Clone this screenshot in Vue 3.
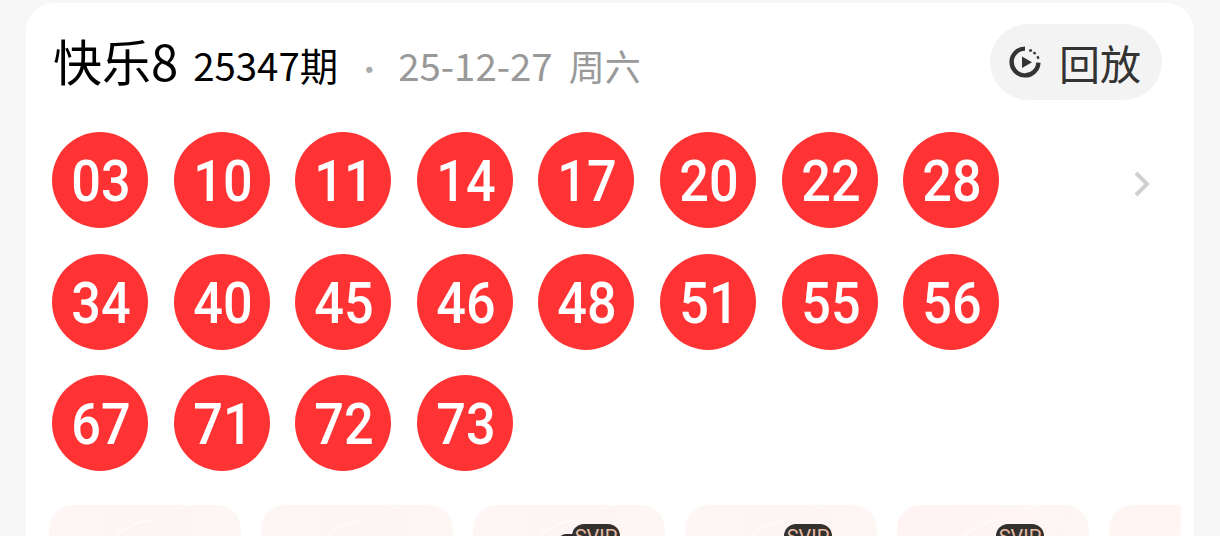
<template>
  <div class="page">
    <div class="card">
      <div class="head">
        <div class="title">
          <span class="name">快乐8</span>
          <span class="issue">25347期</span>
          <span class="dot">·</span>
          <span class="date">25-12-27</span>
          <span class="week">周六</span>
        </div>
        <div class="replay">
          <svg class="replay-icon" viewBox="0 0 32 32" width="32" height="32">
            <path d="M16 2.6A13.4 13.4 0 1 0 29.4 16.6" fill="none" stroke="#333" stroke-width="4.4" />
            <path d="M21.2 3.4l.7 2.2M26.2 6.2l-1.3 1.8M30 11l-2 1" fill="none" stroke="#333" stroke-width="2.8" />
            <path d="M13 10.5l10 5.7-10 5.8z" fill="#333" />
          </svg>
          <span>回放</span>
        </div>
      </div>
      <div class="draw">
        <div class="balls">
          <div class="ball" v-for="n in numbers" :key="n"><span>{{ n }}</span></div>
        </div>
        <svg class="arrow" viewBox="0 0 18 28" width="18" height="28">
          <path d="M3 3l11 11L3 25" fill="none" stroke="#d0d0d0" stroke-width="4" />
        </svg>
      </div>
      <div class="tiles">
        <div class="tile" :class="t.kind" v-for="t in tiles" :key="t.id">
          <svg class="swirl" viewBox="0 0 192 40" width="192" height="40">
            <path d="M60 40C70 24 84 17 102 15M128 5l14-6" fill="none" stroke="#fff" stroke-width="1.5" />
          </svg>
          <span class="shadow" v-if="t.id === 3"></span>
          <span class="svip" v-if="t.svip">SVIP</span>
        </div>
      </div>
    </div>
  </div>
</template>

<script setup>
const numbers = [
  "03", "10", "11", "14", "17", "20", "22", "28",
  "34", "40", "45", "46", "48", "51", "55", "56",
  "67", "71", "72", "73",
];

const tiles = [
  { id: 1, svip: false, kind: "" },
  { id: 2, svip: false, kind: "" },
  { id: 3, svip: true, kind: "" },
  { id: 4, svip: true, kind: "" },
  { id: 5, svip: true, kind: "pink" },
  { id: 6, svip: false, kind: "corner" },
];
</script>

<style>
html,
body {
  margin: 0;
  background: #f7f7f7;
  overflow: hidden;
}
</style>

<style scoped>
.page {
  height: 536px;
  padding: 3px 26px 0;
  box-sizing: border-box;
  overflow: hidden;
  font-family: "Noto Sans CJK SC", "Roboto", sans-serif;
}

.card {
  height: 600px;
  background: #fff;
  border-radius: 28px 28px 0 0;
  padding: 21px 32px 0 23px;
  box-sizing: border-box;
}

.head {
  display: flex;
  align-items: center;
  justify-content: space-between;
  height: 76px;
  padding-left: 4px;
}

.title {
  display: flex;
  align-items: baseline;
  color: #000;
}

.name {
  font-size: 49px;
  line-height: 56px;
}

.issue {
  font-size: 38.4px;
  margin-left: 15px;
}

.dot {
  font-size: 30px;
  color: #aaa;
  margin-left: 16px;
}

.date {
  font-size: 38.4px;
  color: #999;
  margin-left: 14px;
}

.week {
  font-size: 36px;
  color: #999;
  margin-left: 16px;
}

.replay {
  display: flex;
  align-items: center;
  gap: 18px;
  width: 172px;
  height: 76px;
  padding-left: 19px;
  box-sizing: border-box;
  background: #f3f3f3;
  border-radius: 38px;
  color: #333;
  font-size: 41px;
}

.replay-icon {
  flex: none;
}

.draw {
  display: flex;
  margin-top: 32px;
  padding-left: 3px;
  position: relative;
}

.balls {
  display: grid;
  grid-template-columns: repeat(8, 96px);
  gap: 25.6px;
}

.ball {
  width: 96px;
  height: 96px;
  border-radius: 50%;
  background: #ff3333;
  color: #fff;
  display: flex;
  align-items: center;
  justify-content: center;
  font-family: "Roboto", sans-serif;
  font-size: 58px;
  font-weight: 500;
}

.ball span {
  transform: translate(1px, 1px) scaleX(0.9);
}

.arrow {
  position: absolute;
  right: 11px;
  top: 38px;
}

.tiles {
  display: flex;
  gap: 20px;
  margin-top: 34px;
  width: 1132px;
  overflow: hidden;
}

.tile {
  flex: none;
  width: 192px;
  height: 120px;
  border-radius: 24px;
  background: #fdf6f5;
  position: relative;
  overflow: hidden;
}

.tile.pink {
  background: linear-gradient(100deg, #fff3f3, #fdf6f5);
}

.tile.corner {
  background: linear-gradient(135deg, #fff5f3 0 42%, #fbd9de 48%, #fdf0f0 60%);
}

.swirl {
  position: absolute;
  top: 0;
  left: 0;
  opacity: 0.6;
}

.shadow {
  position: absolute;
  top: 29px;
  left: 85px;
  width: 30px;
  height: 10px;
  border-radius: 8px 0 0 0;
  background: #2f2c2b;
}

.svip {
  position: absolute;
  top: 19px;
  right: 45px;
  width: 48px;
  height: 30px;
  border-radius: 12px 12px 12px 0;
  background: #33302e;
  color: #e8bda6;
  font-family: "Roboto", sans-serif;
  font-size: 20px;
  line-height: 27px;
  text-align: center;
}
</style>
